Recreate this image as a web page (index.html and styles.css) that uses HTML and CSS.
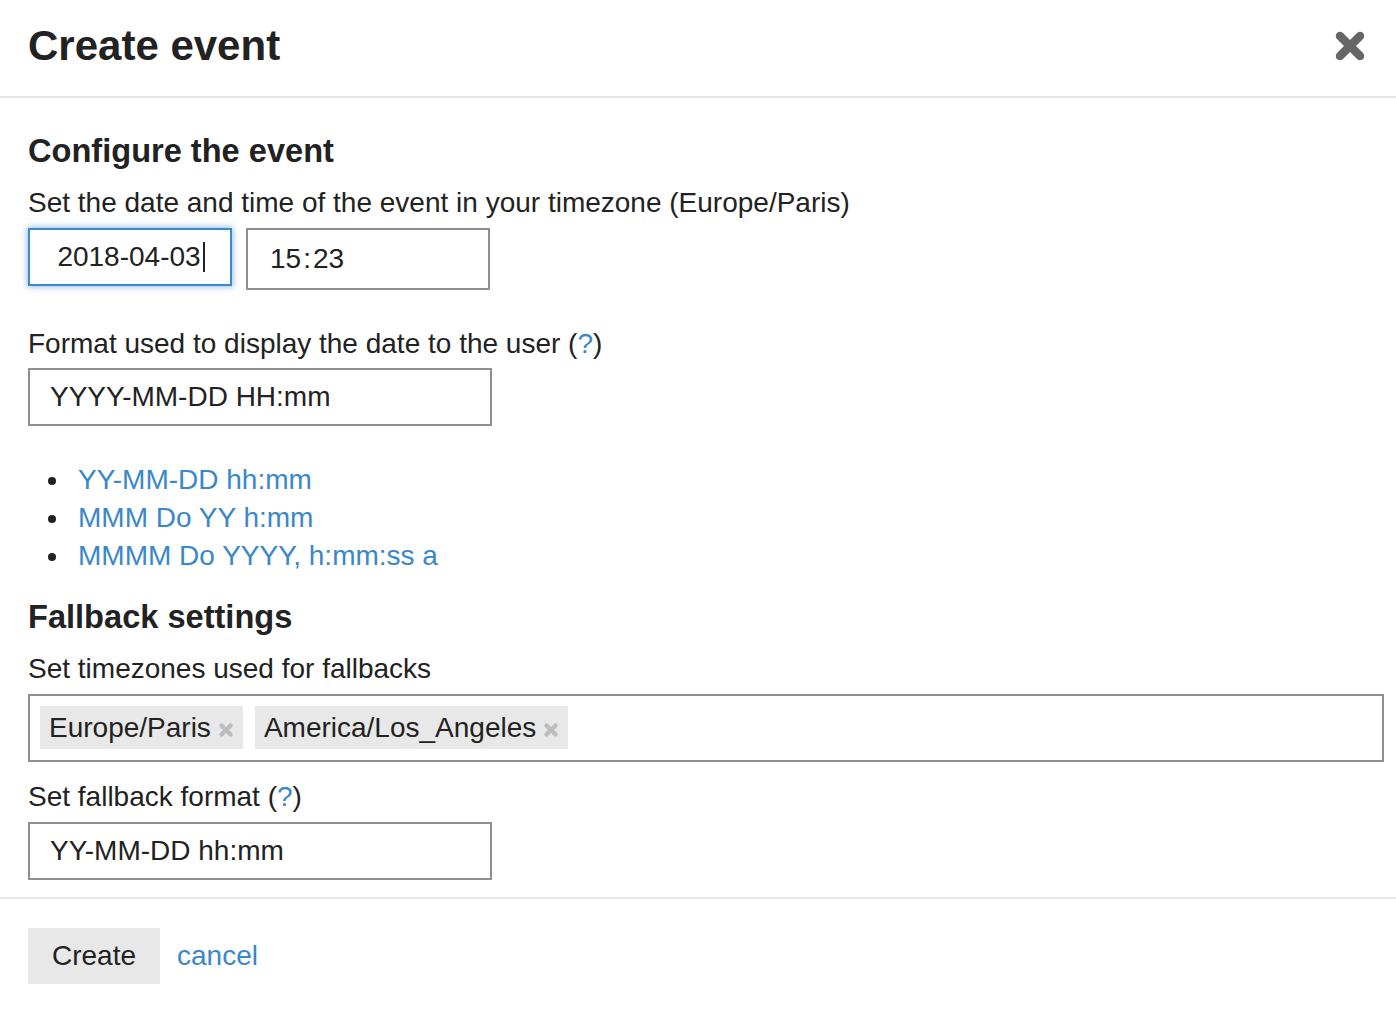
FILE: index.html
```html
<!DOCTYPE html>
<html lang="en">
<head>
<meta charset="utf-8">
<title>Create event</title>
<link rel="stylesheet" href="styles.css">
</head>
<body>
<div class="modal">
  <header class="modal-header">
    <h1 class="modal-title">Create event</h1>
    <button class="close-btn" aria-label="Close">
      <svg width="30" height="30" viewBox="0 0 30 30"><path d="M5 5 L25 25 M25 5 L5 25" stroke="#666" stroke-width="8.5" stroke-linecap="round"/></svg>
    </button>
  </header>

  <main class="modal-body">
    <h2 class="section-title">Configure the event</h2>
    <p class="label">Set the date and time of the event in your timezone (Europe/Paris)</p>
    <div class="datetime-row">
      <div class="field field-date focused"><span>2018-04-03</span><span class="caret"></span></div>
      <div class="field field-time"><span>15<span class="colon">:</span>23</span></div>
    </div>

    <p class="label label-format">Format used to display the date to the user (<a href="#" class="link">?</a>)</p>
    <div class="field field-text">YYYY-MM-DD HH:mm</div>

    <ul class="format-list">
      <li><a href="#" class="link">YY-MM-DD hh:mm</a></li>
      <li><a href="#" class="link">MMM Do YY h:mm</a></li>
      <li><a href="#" class="link">MMMM Do YYYY, h:mm:ss a</a></li>
    </ul>

    <h2 class="section-title section-fallback">Fallback settings</h2>
    <p class="label">Set timezones used for fallbacks</p>
    <div class="tag-box">
      <span class="tag">Europe/Paris<svg class="tag-x" width="16" height="16" viewBox="0 0 16 16"><path d="M3.5 3.5 L12.5 12.5 M12.5 3.5 L3.5 12.5" stroke="#bdbdbd" stroke-width="4.4" stroke-linecap="round"/></svg></span>
      <span class="tag">America/Los_Angeles<svg class="tag-x" width="16" height="16" viewBox="0 0 16 16"><path d="M3.5 3.5 L12.5 12.5 M12.5 3.5 L3.5 12.5" stroke="#bdbdbd" stroke-width="4.4" stroke-linecap="round"/></svg></span>
    </div>

    <p class="label label-fallback">Set fallback format (<a href="#" class="link">?</a>)</p>
    <div class="field field-text">YY-MM-DD hh:mm</div>
  </main>

  <footer class="modal-footer">
    <button class="btn">Create</button>
    <a href="#" class="link cancel">cancel</a>
  </footer>
</div>
</body>
</html>
```

FILE: styles.css
```css
* { box-sizing: border-box; }

html, body {
  margin: 0;
  padding: 0;
  background: #fff;
}

body {
  font-family: "Liberation Sans", Arial, Helvetica, sans-serif;
  color: #222;
  font-size: 28px;
}

.modal-header {
  height: 98px;
  padding: 0 28px;
  display: flex;
  align-items: center;
  justify-content: space-between;
  border-bottom: 2px solid #e6e6e6;
}

.modal-title {
  margin: 0;
  font-size: 42px;
  font-weight: bold;
  line-height: 48px;
  padding-bottom: 4px;
}

.close-btn {
  background: none;
  border: 0;
  padding: 0;
  margin-right: 3px;
  margin-bottom: 4px;
  width: 30px;
  height: 30px;
  display: flex;
}

.modal-body {
  padding: 31px 12px 17px 28px;
}

.section-title {
  margin: 0 0 12px;
  padding-top: 2px;
  font-size: 32.6px;
  font-weight: bold;
  line-height: 40px;
}

.section-fallback {
  margin-top: 20px;
}

.label {
  margin: 0 0 7px;
  padding-top: 2px;
  line-height: 36px;
}

.label-format {
  margin-top: 34px;
  margin-bottom: 6px;
}

.label-fallback {
  margin-top: 15px;
}

.link {
  color: #3a87c9;
  text-decoration: none;
}

.datetime-row {
  display: flex;
  align-items: flex-start;
  gap: 14px;
}

.field {
  border: 2px solid #8f8f8f;
  background: #fff;
  display: flex;
  align-items: center;
  height: 58px;
  line-height: 32px;
}

.field-date {
  width: 204px;
  justify-content: center;
  padding-left: 2px;
}

.field-date.focused {
  border-color: #3c88cf;
  box-shadow: 0 0 6px 1px rgba(60, 136, 207, 0.55);
}

.caret {
  display: inline-block;
  width: 2px;
  height: 30px;
  background: #222;
  margin-left: 2px;
}

.field-time {
  width: 244px;
  height: 62px;
  padding-left: 22px;
}

.colon {
  padding: 0 2px;
}

.field-text {
  width: 464px;
  padding-left: 20px;
}

.format-list {
  margin: 35px 0 0;
  padding-left: 20px;
  list-style: none;
}

.format-list li {
  line-height: 38px;
  display: flex;
  align-items: center;
}

.format-list li::before {
  content: "";
  width: 8px;
  height: 8px;
  border-radius: 50%;
  background: #222;
  margin-right: 22px;
  margin-top: 2px;
  flex: none;
}

.tag-box {
  border: 2px solid #8f8f8f;
  height: 68px;
  padding: 10px;
  display: flex;
  align-items: flex-start;
  gap: 12px;
}

.tag {
  background: #e8e8e8;
  height: 43px;
  padding: 0 9px;
  display: flex;
  align-items: center;
  line-height: 32px;
}

.tag-x {
  margin-left: 7px;
  margin-top: 4px;
}

.modal-footer {
  border-top: 2px solid #e6e6e6;
  padding: 29px 28px 0;
  display: flex;
  align-items: center;
  gap: 17px;
}

.btn {
  font-family: inherit;
  font-size: 28px;
  color: #222;
  background: #e8e8e8;
  border: 0;
  height: 56px;
  padding: 0 24px;
  width: 132px;
}

.cancel {
  font-size: 28px;
}
```
